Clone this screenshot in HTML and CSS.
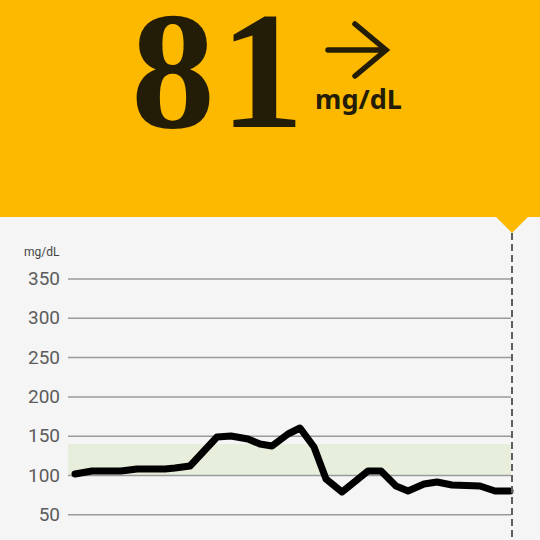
FILE: index.html
```html
<!DOCTYPE html>
<html>
<head>
<meta charset="utf-8">
<link rel="stylesheet" href="styles.css">
</head>
<body>
<header class="hero">
  <div class="value">81</div>
  <div class="side">
    <svg class="trend" width="76" height="60" viewBox="0 0 76 60">
      <path d="M13 30 H71 M40 4 L71 30 L40 56" fill="none" stroke="#231c07" stroke-width="5.5" stroke-linecap="round" stroke-linejoin="miter"/>
    </svg>
    <div class="unit">mg/dL</div>
  </div>
</header>
<main class="chart">
  <svg width="540" height="323" viewBox="0 0 540 323">
    <rect x="68" y="227" width="443" height="31.5" fill="#e7eedc"/>
    <g stroke="#9a9a9a" stroke-width="1.5">
      <line x1="68" y1="62" x2="511" y2="62"/>
      <line x1="68" y1="101.3" x2="511" y2="101.3"/>
      <line x1="68" y1="140.6" x2="511" y2="140.6"/>
      <line x1="68" y1="179.9" x2="511" y2="179.9"/>
      <line x1="68" y1="219.2" x2="511" y2="219.2"/>
      <line x1="68" y1="258.5" x2="511" y2="258.5"/>
      <line x1="68" y1="297.8" x2="511" y2="297.8"/>
    </g>
    <text class="axis-unit" x="24" y="39">mg/dL</text>
    <g class="axis" text-anchor="end">
      <text x="60" y="68">350</text>
      <text x="60" y="107.3">300</text>
      <text x="60" y="146.6">250</text>
      <text x="60" y="185.9">200</text>
      <text x="60" y="225.2">150</text>
      <text x="60" y="264.5">100</text>
      <text x="60" y="303.8">50</text>
    </g>
    <polyline fill="none" stroke="#000" stroke-width="7" stroke-linejoin="round" stroke-linecap="round"
      points="75,257 92,254 121,254 137,252 165,252 175,251 190,249 217,220 231,219 248,222 260,227 272,229 288,217 300,211 314,230 326,262 342,275 368,254 381,254 396,269 408,274 424,267 437,265 452,268 480,269 495,274 510,274"/>
    <line x1="512" y1="16" x2="512" y2="323" stroke="#5e5e5e" stroke-width="2" stroke-dasharray="7 4"/>
    <polygon points="496,0 528,0 512,16" fill="#fdb900"/>
  </svg>
</main>
</body>
</html>
```
FILE: styles.css
```css
html, body {
  margin: 0;
  padding: 0;
}
body {
  background: #f5f5f5;
  width: 540px;
  height: 540px;
  overflow: hidden;
}
.hero {
  height: 217px;
  background: #fdb900;
  display: flex;
  justify-content: center;
  align-items: flex-start;
  padding-right: 7px;
  box-sizing: border-box;
}
.value {
  font-family: "Liberation Serif", serif;
  font-weight: 700;
  font-size: 168px;
  line-height: 140px;
  color: #231c07;
  letter-spacing: 5px;
}
.side {
  margin-left: 6px;
  padding-top: 20px;
  display: flex;
  flex-direction: column;
}
.trend {
  display: block;
}
.unit {
  margin-top: 4px;
  font-family: "Noto Sans", sans-serif;
  font-weight: 700;
  font-size: 27px;
  line-height: 30px;
  color: #231c07;
}
.chart svg {
  display: block;
}
.axis {
  font-family: Roboto, sans-serif;
  font-size: 19px;
  fill: #5c5c5c;
}
.axis-unit {
  font-family: Roboto, sans-serif;
  font-size: 12px;
  fill: #444;
}
```
